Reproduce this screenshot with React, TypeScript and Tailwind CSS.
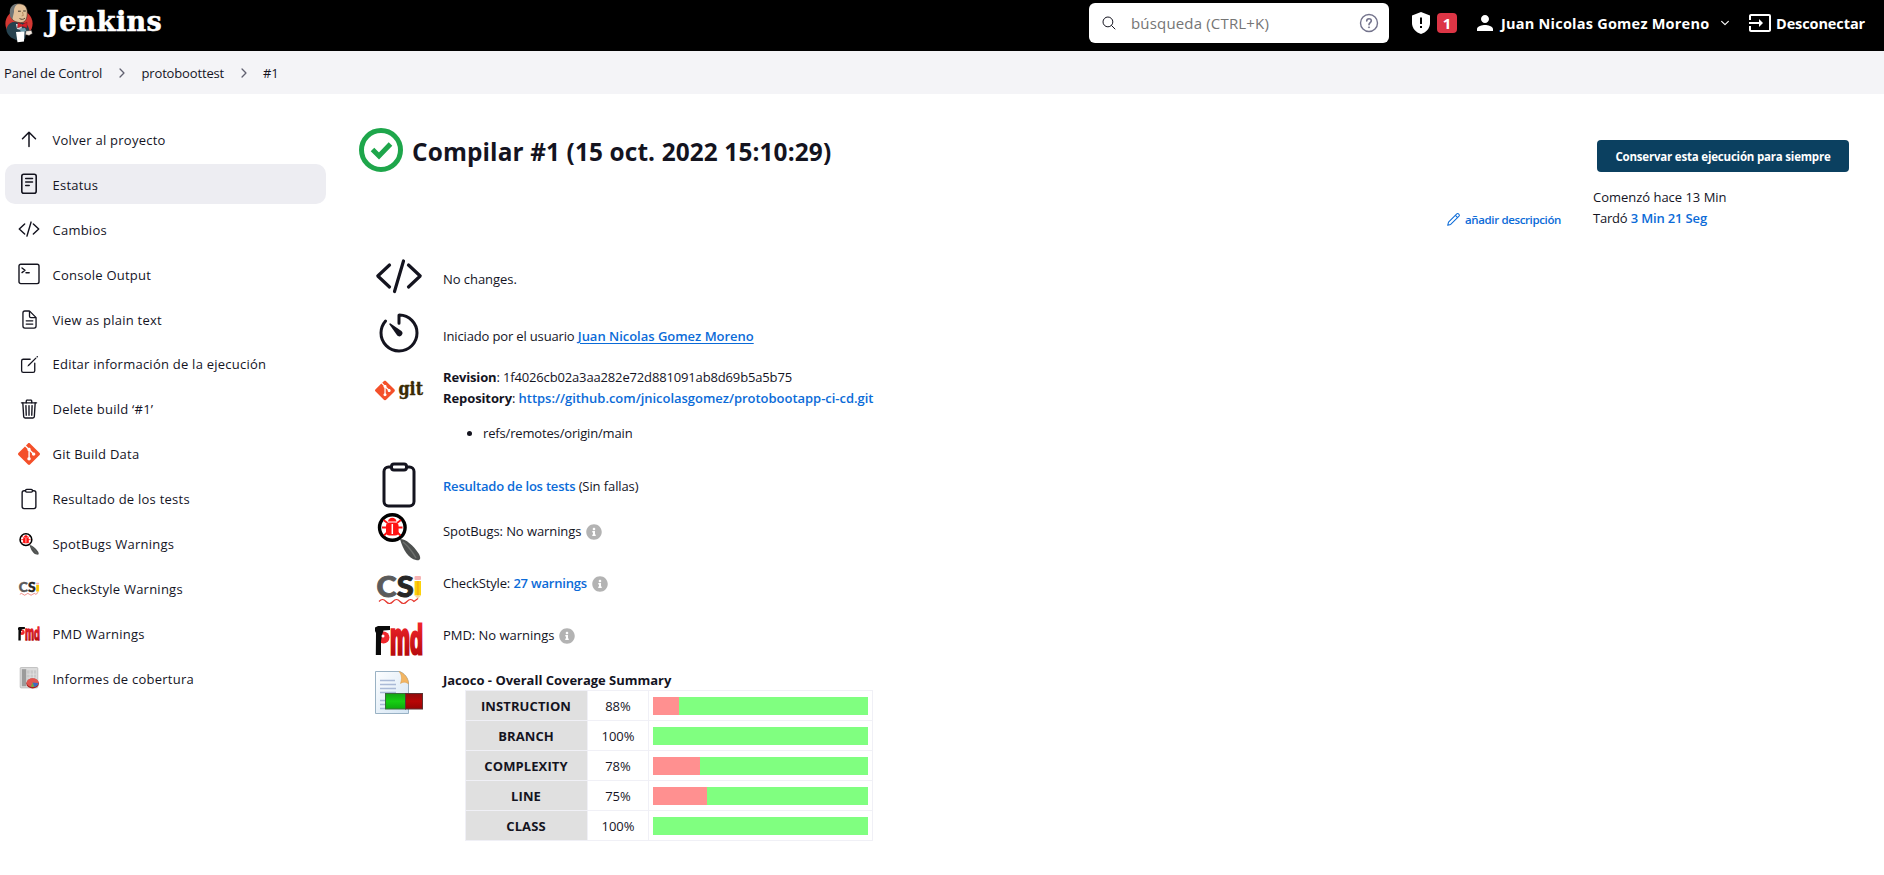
import type { ReactNode } from 'react'
import {
  IoChevronForwardOutline,
  IoChevronDownOutline,
  IoClipboardOutline,
  IoCreateOutline,
  IoDocumentTextOutline,
  IoSearchOutline,
  IoTimerOutline,
  IoTrashOutline,
} from 'react-icons/io5'
import { MdInput, MdPerson } from 'react-icons/md'
import { FaInfoCircle } from 'react-icons/fa'
import { SiGit } from 'react-icons/si'

type IconProps = { className?: string }

function JenkinsLogo() {
  return (
    <svg viewBox="0 0 30 40" className="h-10 w-[30px]">
      <circle cx="15" cy="20.500" r="13.600" fill="#d33833" />
      <path d="M2.500 26 C3.500 21.500 7 19 10 19 L20 20 C23 20.500 25 24 25.500 28 L22 31 L21 36 L14 38 L7 34.500 C4.500 32 2 29 2.500 26Z" fill="#26424f" />
      <path d="M12 21 L18 21 L17.500 27 L13 26Z" fill="#dfe6e8" />
      <path d="M7 9 C6.500 3.500 10 .8 15 .8 C21 .8 23.600 5 23.200 10 C23.200 15.500 21.500 19 18 19.500 C13.500 20 8.500 18 7.500 15Z" fill="#e3c19a" stroke="#3a3027" strokeWidth=".6" />
      <path d="M6.300 14 C4.600 6 7 1 14 .8 C10.800 3 10 5 10 9 L8.400 16Z" fill="#6f7577" />
      <path d="M14 8.200 h2.800 M19.200 8 h2.600" stroke="#3a3027" strokeWidth="1" />
      <path d="M18.500 9 L19.300 12.500 L17.600 13" stroke="#a87a52" strokeWidth=".8" fill="none" />
      <path d="M15.500 15.500 C17.500 16.800 19.500 16.500 21 15.100" stroke="#4a3426" strokeWidth=".9" fill="none" />
      <path d="M14 19.500 L18.200 21.500 L23 19.200 L23 25 L18.200 23.200 L13.500 25Z" fill="#d6212a" stroke="#6b1216" strokeWidth=".4" />
      <path d="M15.500 25.500 L21 25 L22.500 28 L17 29.500Z" fill="#6a98a8" />
      <path d="M12 29 L20.500 28.500 L20 38.500 L13.500 39.200Z" fill="#fff" />
      <path d="M22 28 L27.500 27.400 L28.300 30.500 L25 32.500 L21.500 31.500Z" fill="#f3e9df" stroke="#333" strokeWidth=".4" />
    </svg>
  )
}

function CodeIcon({ className }: IconProps) {
  return (
    <svg viewBox="0 0 48 48" className={className} fill="none" stroke="currentColor" strokeWidth="3.200" strokeLinecap="round" strokeLinejoin="round">
      <path d="M14.500 13 L2.800 24 L14.500 35" />
      <path d="M33.500 13 L45.200 24 L33.500 35" />
      <path d="M28.500 9 L19.500 39.500" />
    </svg>
  )
}

function ArrowUpIcon() {
  return (
    <svg viewBox="0 0 22 22" className="size-[22px]" fill="none" stroke="currentColor" strokeWidth="1.500" strokeLinecap="round" strokeLinejoin="round">
      <path d="M11 17.500 V3.500 M4.500 9.800 L11 3.200 L17.500 9.800" />
    </svg>
  )
}

function PencilIcon() {
  return (
    <svg viewBox="0 0 16 16" className="mr-1 size-[15px]" fill="none" stroke="currentColor" strokeWidth="1.100" strokeLinejoin="round">
      <path d="M1.800 14.200 L2.700 10.800 L11.500 2 C12.800 .8 15.200 3 13.900 4.400 L5 13.300Z" />
      <path d="M10 3.600 L12.400 6" />
    </svg>
  )
}

function StatusIcon() {
  return (
    <svg viewBox="0 0 20 22" className="h-[22px] w-5" fill="none" stroke="currentColor" strokeWidth="1.600" strokeLinecap="round">
      <rect x="2.800" y="1.300" width="14.400" height="19" rx="2" />
      <path d="M6.700 5.500 h6.800 M6.700 9 h6.800 M6.700 12.500 h3.500" strokeWidth="1.500" />
    </svg>
  )
}

function ConsoleIcon() {
  return (
    <svg viewBox="0 0 22 22" className="size-[22px]" fill="none" stroke="currentColor" strokeWidth="1.400" strokeLinecap="round" strokeLinejoin="round">
      <rect x="1" y="1.200" width="20" height="19.400" rx="1.800" />
      <path d="M4 5 L7 7.300 L4 9.600 M8 9.800 h3.200" />
    </svg>
  )
}

function SpotBugsIcon({ className }: IconProps) {
  return (
    <svg viewBox="0 0 48 48" className={className}>
      <path d="M25 26 C31 26 38 32 44 41 C46.500 46 45 48 41 47 C34 46 28 37 25 26Z" fill="#4d504f" />
      <path d="M28 29 C33 33 37 38 41 45" stroke="#6d706e" strokeWidth="1.500" fill="none" />
      <circle cx="17.300" cy="14.500" r="12.800" fill="#fff" stroke="#000" strokeWidth="3.400" />
      <path d="M8.500 7 L12.500 10 M26 7 L22 10 M7 14.500 h6 M27.500 14.500 h-6 M9 22.500 L12.500 19 M25.500 22.500 L22 19" stroke="#f11" strokeWidth="1.800" />
      <path d="M13 8.500 C13.500 3.500 21 3.500 21.500 8.500Z" fill="#f11" />
      <rect x="11" y="9.500" width="12.600" height="13" rx="3.500" fill="#f11" />
      <path d="M17.300 11 v10" stroke="#fff" strokeWidth="1.500" />
    </svg>
  )
}

function CheckStyleIcon({ className }: IconProps) {
  return (
    <svg viewBox="0 0 48 32" className={className} overflow="visible">
      <text x="1.500" y="22" textLength="20" lengthAdjust="spacingAndGlyphs" fontFamily="Lato" fontWeight="900" fontSize="28" fill="#5b5b5b" stroke="#5b5b5b" strokeWidth=".9">C</text>
      <text x="21.800" y="22" textLength="17" lengthAdjust="spacingAndGlyphs" fontFamily="Lato" fontWeight="900" fontSize="28" fill="#262626" stroke="#262626" strokeWidth=".9">S</text>
      <rect x="39.500" y="1" width="6.500" height="4" rx="1" fill="#f7b3b3" />
      <path d="M39.500 6 h6.500 v14.500 h-6.500Z" fill="#fcd20a" />
      <path d="M41.800 6 h2 v14.500 h-2Z" fill="#f5b50b" />
      <path d="M39.500 20.500 h6.500 L43 24Z" fill="#f5d9a6" />
      <path d="M4 26.500 q3.500 -4 7 0 t7 0 t7 0 t7 0 t7 0 L43 23.500" fill="none" stroke="#e5352c" strokeWidth="1.200" />
    </svg>
  )
}

function PmdIcon({ className }: IconProps) {
  return (
    <svg viewBox="0 0 48 32" className={className} overflow="visible">
      <defs>
        <linearGradient id="pmdRed" x1="0" y1="0" x2="0" y2="1">
          <stop offset="0" stopColor="#fb2a2f" />
          <stop offset="1" stopColor="#ab0508" />
        </linearGradient>
      </defs>
      <circle cx="8.500" cy="13.500" r="6" fill="#f0272c" />
      <path d="M0 3.500 L3 2 L15 2 L15 6 L8.500 6.500 L7 11 L6 17 L6 31 L.8 31 L1 9 L0 7Z" fill="#0a0a0a" />
      <circle cx="8" cy="12" r="1.500" fill="#fff" />
      <text transform="translate(15 30) scale(1 1.820)" textLength="20" lengthAdjust="spacingAndGlyphs" fontFamily="Liberation Sans" fontWeight="700" fontSize="24" fill="url(#pmdRed)" stroke="url(#pmdRed)" strokeWidth="1.800">m</text>
      <text transform="translate(35 30) scale(1 1.700)" textLength="13" lengthAdjust="spacingAndGlyphs" fontFamily="Liberation Sans" fontWeight="700" fontSize="24" fill="url(#pmdRed)" stroke="url(#pmdRed)" strokeWidth="1.800">d</text>
    </svg>
  )
}

function GitLogo() {
  return (
    <svg viewBox="0 0 48 48" className="size-12" overflow="visible">
      <g transform="translate(0 13.500) scale(.83)">
        <SiGit size={24} color="#f4502a" />
      </g>
      <text x="23.500" y="27.500" textLength="24.500" lengthAdjust="spacingAndGlyphs" fontFamily="DejaVu Serif" fontWeight="700" fontSize="18.500" fill="#3a2b05" stroke="#3a2b05" strokeWidth=".4">git</text>
    </svg>
  )
}

function CoverageIcon() {
  return (
    <svg viewBox="0 0 20 20" className="size-[22px]">
      <rect x="2" y=".5" width="16" height="18.500" rx=".8" fill="#dcdcdc" stroke="#b3b3b3" strokeWidth=".7" />
      <rect x="3.500" y="2" width="4" height="15.500" fill="#9b9b9b" />
      <path d="M8 3 h8.500 v14 h-8.500Z" fill="#c9c9c9" />
      <path d="M8 6.500 h8.500 M8 10 h8.500 M8 13.500 h8.500 M11 3 v14 M14 3 v14" stroke="#e8e8e8" strokeWidth=".6" />
      <ellipse cx="13.300" cy="15" rx="5.700" ry="4.600" fill="#a8201c" />
      <ellipse cx="13.300" cy="14.200" rx="5.400" ry="4" fill="#e2544e" />
      <path d="M13.300 14.200 L18.600 14.800 A5.400 4 0 0 1 14.500 18.100Z" fill="#3b6cc0" />
      <path d="M13.300 14.200 L14.500 18.100 A5.400 4 0 0 1 11.800 18Z" fill="#6cae3f" />
    </svg>
  )
}

function JacocoIcon() {
  return (
    <svg viewBox="0 0 48 44" className="h-11 w-12">
      <defs>
        <linearGradient id="page" x1="0" y1="0" x2="1" y2="1">
          <stop offset="0" stopColor="#fdfeff" />
          <stop offset="1" stopColor="#d3e4f3" />
        </linearGradient>
        <linearGradient id="covered" x1="0" y1="0" x2="0" y2="1">
          <stop offset="0" stopColor="#15a315" />
          <stop offset=".5" stopColor="#16cf12" />
          <stop offset="1" stopColor="#0ea90e" />
        </linearGradient>
        <linearGradient id="missed" x1="0" y1="0" x2="0" y2="1">
          <stop offset="0" stopColor="#8f0b0b" />
          <stop offset=".5" stopColor="#b80606" />
          <stop offset="1" stopColor="#960404" />
        </linearGradient>
      </defs>
      <path d="M.5 .5 H24.500 C29 2 33.500 7 33.500 13 V42.500 H.5Z" fill="url(#page)" stroke="#8fa9bd" strokeWidth=".9" />
      <path d="M24 .5 C27 4 27 8 25.500 12.500 C28.500 10.500 31 11 33.500 13 C33.500 7 29 2 24 .5Z" fill="#f3b562" stroke="#d99a45" strokeWidth=".5" />
      <path d="M5 9.500 h15 M5 13.500 h16 M5 17.500 h16 M5 21.500 h16 M5 29.500 h5 M5 33.500 h5 M5 37.500 h5" stroke="#a9b9d6" strokeWidth="1.300" />
      <rect x="10.500" y="22.500" width="20" height="15.500" fill="url(#covered)" stroke="#3c6b3c" />
      <rect x="30.500" y="22.500" width="17" height="15.500" fill="url(#missed)" stroke="#5b3434" />
    </svg>
  )
}

function HelpIcon() {
  return (
    <svg viewBox="0 0 20 20" className="size-5" fill="none" stroke="#73738c">
      <circle cx="10" cy="10" r="8.500" strokeWidth="1.400" />
      <path d="M7.700 8 C7.700 5 12.300 5 12.300 7.800 C12.300 9.500 10 9.600 10 11.700" strokeWidth="1.600" strokeLinecap="round" />
      <circle cx="10" cy="14.300" r=".6" fill="#73738c" strokeWidth=".8" />
    </svg>
  )
}

function ShieldIcon() {
  return (
    <svg viewBox="0 0 18 22" className="h-[22px] w-[18px]">
      <path d="M9 0 L18 3.500 V11 C18 16.500 14 20.500 9 22 C4 20.500 0 16.500 0 11 V3.500Z" fill="#fff" />
      <path d="M8 5.500 h2 v6.500 h-2Z M8 14 h2 v2 h-2Z" fill="#000" />
    </svg>
  )
}

function SuccessIcon() {
  return (
    <svg viewBox="0 0 44 44" className="size-11" fill="none" stroke="#1ea64b">
      <circle cx="22" cy="22" r="19.500" strokeWidth="5" />
      <path d="M13.500 21.500 L20 28 L31.500 16" strokeWidth="5" />
    </svg>
  )
}

const tasks: { label: string; icon: ReactNode; active?: boolean }[] = [
  { label: 'Volver al proyecto', icon: <ArrowUpIcon /> },
  { label: 'Estatus', icon: <StatusIcon />, active: true },
  { label: 'Cambios', icon: <CodeIcon className="size-[22px]" /> },
  { label: 'Console Output', icon: <ConsoleIcon /> },
  { label: 'View as plain text', icon: <IoDocumentTextOutline className="size-[21px]" /> },
  { label: 'Editar información de la ejecución', icon: <IoCreateOutline className="size-[21px]" /> },
  { label: 'Delete build ‘#1’', icon: <IoTrashOutline className="size-[22px]" /> },
  { label: 'Git Build Data', icon: <SiGit className="size-[22px] text-[#f4502a]" /> },
  { label: 'Resultado de los tests', icon: <IoClipboardOutline className="size-[22px]" /> },
  { label: 'SpotBugs Warnings', icon: <SpotBugsIcon className="size-[22px]" /> },
  { label: 'CheckStyle Warnings', icon: <CheckStyleIcon className="mt-[2px] h-[15px] w-[22px]" /> },
  { label: 'PMD Warnings', icon: <PmdIcon className="h-[15px] w-[22px]" /> },
  { label: 'Informes de cobertura', icon: <CoverageIcon /> },
]

const coverage = [
  { name: 'INSTRUCTION', percent: 88 },
  { name: 'BRANCH', percent: 100 },
  { name: 'COMPLEXITY', percent: 78 },
  { name: 'LINE', percent: 75 },
  { name: 'CLASS', percent: 100 },
]

function Header() {
  return (
    <header className="flex h-[51px] items-start bg-black text-white">
      <div className="flex grow items-start pt-[3px] pl-1">
        <JenkinsLogo />
        <span className="mt-1 ml-3 font-['DejaVu_Serif',serif] text-[27px] leading-[30px] font-bold tracking-[0.4px] [-webkit-text-stroke:0.5px_white]">Jenkins</span>
      </div>
      <div className="mt-[3px] flex h-10 w-[300px] items-center rounded-md bg-white pr-[10px] pl-3">
        <IoSearchOutline className="size-4 text-[#14141f]" />
        <span className="ml-[14px] grow text-[15px] tracking-[0.17px] text-[#757575]">búsqueda (CTRL+K)</span>
        <HelpIcon />
      </div>
      <div className="mt-[3px] flex h-10 items-center font-bold">
        <div className="ml-[23px] flex items-center gap-[7px]">
          <ShieldIcon />
          <span className="flex size-5 items-center justify-center rounded bg-[#dc3545] text-[15px]">1</span>
        </div>
        <MdPerson className="ml-4 size-6" />
        <span className="ml-1 w-[209px] text-[14.5px] tracking-[0.23px] whitespace-nowrap">Juan Nicolas Gomez Moreno</span>
        <IoChevronDownOutline className="ml-[9px] size-3" />
        <MdInput className="ml-[17px] size-6" />
        <span className="mr-[18px] ml-1 w-[90px] text-[14.5px] tracking-[-0.1px] whitespace-nowrap">Desconectar</span>
      </div>
    </header>
  )
}

function Breadcrumbs() {
  return (
    <nav className="flex h-[43px] items-center bg-[#f4f4f7] pl-1 text-[13px] tracking-[-0.15px]">
      <span className="w-[98px] pt-[2px] whitespace-nowrap">Panel de Control</span>
      <IoChevronForwardOutline className="ml-[13px] size-[14px] text-[#606070]" />
      <span className="ml-[12.500px] w-[83px] pt-[2px] whitespace-nowrap">protoboottest</span>
      <IoChevronForwardOutline className="ml-[12.500px] size-[14px] text-[#606070]" />
      <span className="ml-[12px] pt-[2px]">#1</span>
    </nav>
  )
}

function SidePanel() {
  return (
    <aside className="ml-[5px] flex w-[321px] shrink-0 flex-col gap-[4.920px] pt-[25px] text-[13px] font-medium tracking-[0.240px]">
      {tasks.map((task) => (
        <a key={task.label} className={task.active ? 'flex h-10 items-center rounded-[10px] bg-[#ededf2] pl-[13px]' : 'flex h-10 items-center pl-[13px]'}>
          <span className="flex w-[22px] shrink-0 justify-center pt-px">{task.icon}</span>
          <span className="ml-[12.500px] pt-[2.800px]">{task.label}</span>
        </a>
      ))}
    </aside>
  )
}

function SummaryRow({ icon, children, className }: { icon: ReactNode; children: ReactNode; className: string }) {
  return (
    <div className={`flex ${className}`}>
      <div className="mr-5 flex w-12 shrink-0 justify-center">{icon}</div>
      <div>{children}</div>
    </div>
  )
}

function Coverage() {
  return (
    <table className="ml-[22px] border-collapse">
      <tbody>
        {coverage.map((row) => (
          <tr key={row.name} className="h-[30px]">
            <th className="w-[122px] border border-[#f0f0f6] bg-[#e0e0e0] pt-px pr-px text-center font-bold tracking-[0.1px]">{row.name}</th>
            <td className="w-[61px] border border-[#f0f0f6] pt-px text-center">{row.percent}%</td>
            <td className="w-[224px] border border-[#f0f0f6] px-1">
              <div className="h-[18px] bg-[#ff9090]">
                <div className="ml-auto h-full bg-[#80ff80]" style={{ width: `${row.percent}%` }} />
              </div>
            </td>
          </tr>
        ))}
      </tbody>
    </table>
  )
}

export default function App() {
  return (
    <div className="h-[875px] w-[1884px] overflow-hidden bg-white font-['Open_Sans',sans-serif] text-[13px] leading-[21px] text-[#14141f]">
      <Header />
      <Breadcrumbs />
      <div className="flex">
        <SidePanel />
        <main className="ml-[33px] flex grow flex-col">
          <div className="flex h-[154px]">
            <div className="flex grow items-start pt-[34px]">
              <SuccessIcon />
              <h1 className="mt-[6px] ml-[9px] text-[24.400px] leading-9 font-bold tracking-[0.120px]">Compilar #1 (15 oct. 2022 15:10:29)</h1>
            </div>
            <a className="mt-[115px] flex h-[21px] items-center text-[11.5px] font-semibold tracking-[-0.37px] text-[#0b6bd8]">
              <PencilIcon />
              añadir descripción
            </a>
            <div className="mr-[35px] ml-8 flex w-[256px] flex-col pt-[46px]">
              <button className="mb-[15px] ml-1 h-8 w-[252px] rounded bg-[#0b4060] text-[11.5px] font-bold tracking-[-0.2px] text-white">Conservar esta ejecución para siempre</button>
              <p className="tracking-[-0.02px]">Comenzó hace 13 Min</p>
              <p className="tracking-[-0.2px]">
                Tardó <a className="font-semibold tracking-[-0.15px] text-[#0b6bd8]">3 Min 21 Seg</a>
              </p>
            </div>
          </div>
          <div className="flex flex-col pl-4">
            <SummaryRow className="h-[57px] items-center" icon={<CodeIcon className="-mt-[2px] size-12" />}>
              <p className="pt-[6px] tracking-[-0.05px]">No changes.</p>
            </SummaryRow>
            <SummaryRow className="h-[57px] items-center" icon={<IoTimerOutline className="-mt-[2px] size-12" />}>
              <p className="pt-[6px] tracking-[-0.15px]">
                Iniciado por el usuario <a className="font-semibold tracking-[-0.02px] text-[#0b6bd8] underline underline-offset-2">Juan Nicolas Gomez Moreno</a>
              </p>
            </SummaryRow>
            <SummaryRow className="h-[98px] pt-[5px]" icon={<GitLogo />}>
              <p className="tracking-[-0.15px]">
                <b>Revision</b>: 1f4026cb02a3aa282e72d881091ab8d69b5a5b75
              </p>
              <p className="tracking-[-0.1px]">
                <b>Repository</b>: <a className="font-semibold tracking-[-0.030px] text-[#0b6bd8]">https://github.com/jnicolasgomez/protobootapp-ci-cd.git</a>
              </p>
              <ul className="mt-[14px] list-disc pl-10 tracking-[-0.16px]">
                <li>refs/remotes/origin/main</li>
              </ul>
            </SummaryRow>
            <SummaryRow className="h-[51px] items-center" icon={<IoClipboardOutline className="-mt-[2px] size-12" />}>
              <p className="pt-[2px] tracking-[-0.1px]">
                <a className="font-semibold tracking-[-0.2px] text-[#0b6bd8]">Resultado de los tests</a> (Sin fallas)
              </p>
            </SummaryRow>
            <SummaryRow className="h-[52px] pt-[2px]" icon={<SpotBugsIcon className="size-12" />}>
              <p className="flex items-center pt-2 tracking-[-0.08px]">
                SpotBugs: No warnings <FaInfoCircle className="ml-[5px] size-4 text-[#b3b3b3]" />
              </p>
            </SummaryRow>
            <SummaryRow className="h-[52px] pt-2" icon={<CheckStyleIcon className="mt-1 h-8 w-12" />}>
              <p className="flex items-center pt-[2px] tracking-[-0.15px]">
                CheckStyle:&nbsp;<a className="font-semibold tracking-[-0.2px] text-[#0b6bd8]">27 warnings</a> <FaInfoCircle className="ml-[5px] size-4 text-[#b3b3b3]" />
              </p>
            </SummaryRow>
            <SummaryRow className="h-[52px] pt-[9px]" icon={<PmdIcon className="h-8 w-12" />}>
              <p className="flex items-center pt-[1px] tracking-[-0.03px]">
                PMD: No warnings <FaInfoCircle className="ml-[5px] size-4 text-[#b3b3b3]" />
              </p>
            </SummaryRow>
            <SummaryRow className="pt-1" icon={<JacocoIcon />}>
              <p className="-mt-px -mb-px font-bold tracking-[-0.02px]">Jacoco - Overall Coverage Summary</p>
              <Coverage />
            </SummaryRow>
          </div>
        </main>
      </div>
    </div>
  )
}
